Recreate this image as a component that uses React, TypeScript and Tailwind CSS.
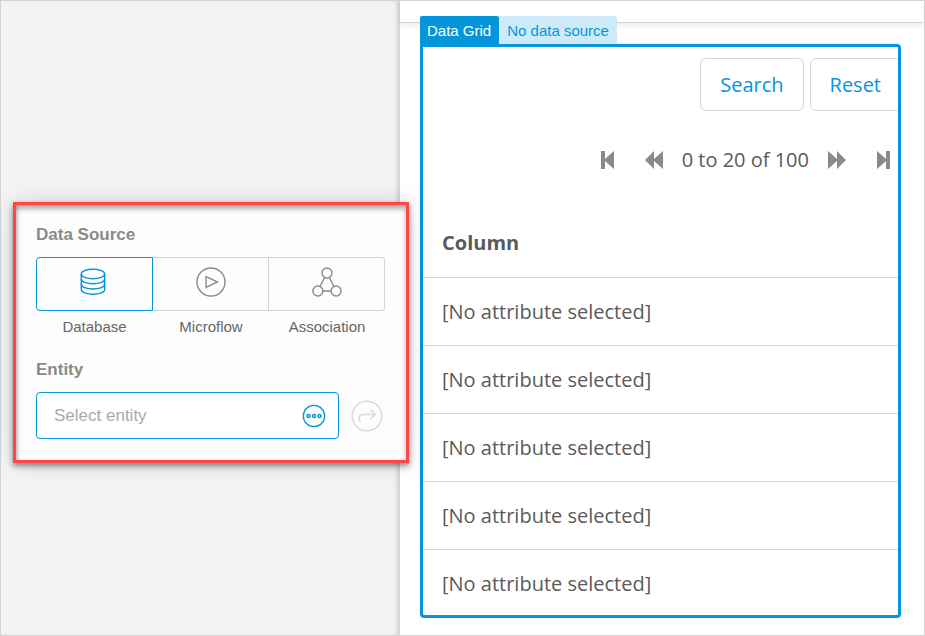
import type { ReactNode } from "react";

const sources: { name: string; icon: ReactNode }[] = [
  {
    name: "Database",
    icon: (
      <svg width="29" height="30" viewBox="0 0 29 30" fill="none" stroke="currentColor" strokeWidth="1.4" aria-hidden="true">
        <ellipse cx="13" cy="7" rx="11.7" ry="4.800" />
        <path d="M1.300 7v15.500c0 2.700 5.200 4.800 11.700 4.800s11.700-2.100 11.700-4.800V7" />
        <path d="M1.300 12c0 2.700 5.200 4.800 11.700 4.800s11.700-2.100 11.700-4.800" />
        <path d="M1.300 17.200c0 2.700 5.200 4.800 11.700 4.800s11.700-2.100 11.700-4.800" />
      </svg>
    ),
  },
  {
    name: "Microflow",
    icon: (
      <svg width="30" height="30" viewBox="0 0 30 30" fill="none" stroke="currentColor" strokeWidth="1.4" aria-hidden="true">
        <circle cx="15" cy="15" r="14" />
        <path d="M10 9.500v11l11.500-5.500z" />
      </svg>
    ),
  },
  {
    name: "Association",
    icon: (
      <svg width="30" height="30" viewBox="0 0 30 30" fill="none" stroke="currentColor" strokeWidth="1.4" aria-hidden="true">
        <circle cx="15" cy="6" r="5" />
        <circle cx="5.900" cy="24" r="5" />
        <circle cx="24.100" cy="24" r="5" />
        <path d="M12.700 10.500 8 19.500M17.300 10.500l4.700 9M10.900 24h8.200" />
      </svg>
    ),
  },
];

const cellStyles = [
  "border border-[#0595db] rounded-l text-[#0595db]",
  "border-y border-r border-[#d4d4d4] text-[#8a8a8a]",
  "border-y border-r border-[#d4d4d4] rounded-r text-[#8a8a8a]",
];

const rows = [1, 2, 3, 4, 5];

function DataSourcePanel() {
  return (
    <section className="relative z-10 -mr-[9px] border-3 border-[#ff4545] bg-[#fdfdfd] px-5 pt-5 pb-[21px] shadow-[0_3px_6px_rgba(0,0,0,0.45),0_0_26px_rgba(0,0,0,0.12),inset_0_4px_5px_rgba(0,0,0,0.3),inset_2px_0_3px_rgba(0,0,0,0.12)]">
      <h2 className="text-[17px] leading-5 font-bold text-[#8a8a8a]">Data Source</h2>
      <div className="mt-3 mr-[1px] grid grid-cols-[117fr_116fr_116fr]">
        {sources.map((source, i) => (
          <button key={source.name} type="button" aria-pressed={i === 0} className="text-[15px] leading-5 text-[#666]">
            <span className={`flex h-[54px] items-center justify-center pb-1 ${cellStyles[i]}`}>{source.icon}</span>
            <span className="mt-[6px] block">{source.name}</span>
          </button>
        ))}
      </div>
      <label htmlFor="entity" className="mt-[23px] block text-[17px] leading-5 font-bold text-[#8a8a8a]">
        Entity
      </label>
      <div className="mt-3 flex items-center gap-3">
        <div className="flex h-[47px] min-w-0 flex-1 items-center rounded border border-[#0595db] bg-white pr-3 pl-[17px]">
          <input
            id="entity"
            type="text"
            placeholder="Select entity"
            className="min-w-0 flex-1 text-[17px] leading-5 text-[#555] outline-none placeholder:text-[#aaa]"
          />
          <button type="button" aria-label="Browse entities" className="text-[#0595db]">
            <svg width="24" height="24" viewBox="0 0 24 24" fill="none" stroke="currentColor" strokeWidth="1.300" aria-hidden="true">
              <circle cx="12" cy="12" r="10.700" />
              <g strokeWidth="1.500">
                <circle cx="6.500" cy="12" r="1.500" />
                <circle cx="12" cy="12" r="1.500" />
                <circle cx="17.500" cy="12" r="1.500" />
              </g>
            </svg>
          </button>
        </div>
        <button type="button" aria-label="Go to entity" className="mr-[3px] text-[#dcdcdc]">
          <svg width="32" height="32" viewBox="0 0 32 32" fill="none" stroke="currentColor" strokeWidth="1.600" aria-hidden="true">
            <circle cx="16" cy="16" r="14.800" />
            <path d="M9.500 22.500C6.500 18 8 14.500 12 14.500h12M19.500 10l4.800 4.500-4.800 4.500" />
          </svg>
        </button>
      </div>
    </section>
  );
}

function PagerButton({ label, width, d }: { label: string; width: number; d: string }) {
  return (
    <button type="button" aria-label={label} className="text-[#8a8a8a]">
      <svg width={width} height="18" viewBox={`0 0 ${width} 18`} fill="currentColor" aria-hidden="true">
        <path d={d} />
      </svg>
    </button>
  );
}

function DataGrid() {
  return (
    <div className="overflow-hidden rounded-r rounded-bl border-3 border-[#0595db] bg-white font-['Open_Sans',sans-serif] text-xl leading-7 text-[#5a5a5a]">
      <div className="-mr-[3px] flex justify-end gap-[6px] pt-[11px] text-[#0595db]">
        <button type="button" className="h-[53px] rounded-md border border-[#d7d7d7] px-[19px]">
          Search
        </button>
        <button type="button" className="h-[53px] rounded-md border border-[#d7d7d7] px-[19px]">
          Reset
        </button>
      </div>
      <div className="mt-[35px] flex items-center justify-end pr-2">
        <PagerButton label="First page" width={13} d="M0 0h4v8l9-8v18L4 10v8H0z" />
        <div className="ml-[31px] flex items-center gap-[19px]">
          <PagerButton label="Previous page" width={18} d="M0 9l9-9v8l9-8v18l-9-8v8z" />
          <span>0 to 20 of 100</span>
          <PagerButton label="Next page" width={18} d="M18 9L9 0v8L0 0v18l9-8v8z" />
        </div>
        <div className="ml-[31px] flex">
          <PagerButton label="Last page" width={13} d="M13 0H9v8L0 0v18l9-8v8h4z" />
        </div>
      </div>
      <table className="mt-[35px] w-full border-collapse text-left">
        <thead>
          <tr className="border-b border-[#d4d4d4]">
            <th className="px-[19px] pt-5 pb-5 font-bold">Column</th>
          </tr>
        </thead>
        <tbody>
          {rows.map((row) => (
            <tr key={row} className="border-b border-[#d4d4d4] last:border-b-0">
              <td className={row === rows.length ? "px-[19px] pt-5 pb-[17px]" : "px-[19px] pt-5 pb-[19px]"}>
                [No attribute selected]
              </td>
            </tr>
          ))}
        </tbody>
      </table>
    </div>
  );
}

export default function App() {
  return (
    <div className="flex min-h-screen border border-[#d4d4d4] bg-white font-['Liberation_Sans',Arial,sans-serif]">
      <aside className="w-[399px] shrink-0 bg-[#f4f4f4] pt-[201px] pl-3 shadow-[inset_-1px_0_0_#d4d4d4,inset_-5px_0_5px_-2px_rgba(0,0,0,0.14)]">
        <DataSourcePanel />
      </aside>
      <main className="min-w-0 flex-1 pb-[17px]">
        <div className="mr-[1px] h-[22px] border-b border-[#d4d4d4] shadow-[0_3px_5px_rgba(0,0,0,0.08)]" />
        <div className="-mt-[7px] pr-[23px] pl-5">
          <div className="relative flex text-[15px] leading-7">
            <span className="rounded-t-xs bg-[#0595db] pt-[1px] pr-2 pl-[7px] leading-[27px] text-white">Data Grid</span>
            <span className="rounded-tr-xs bg-[#cdeaf8] px-2 pt-[1px] leading-[27px] text-[#0595db]">No data source</span>
          </div>
          <DataGrid />
        </div>
      </main>
    </div>
  );
}
